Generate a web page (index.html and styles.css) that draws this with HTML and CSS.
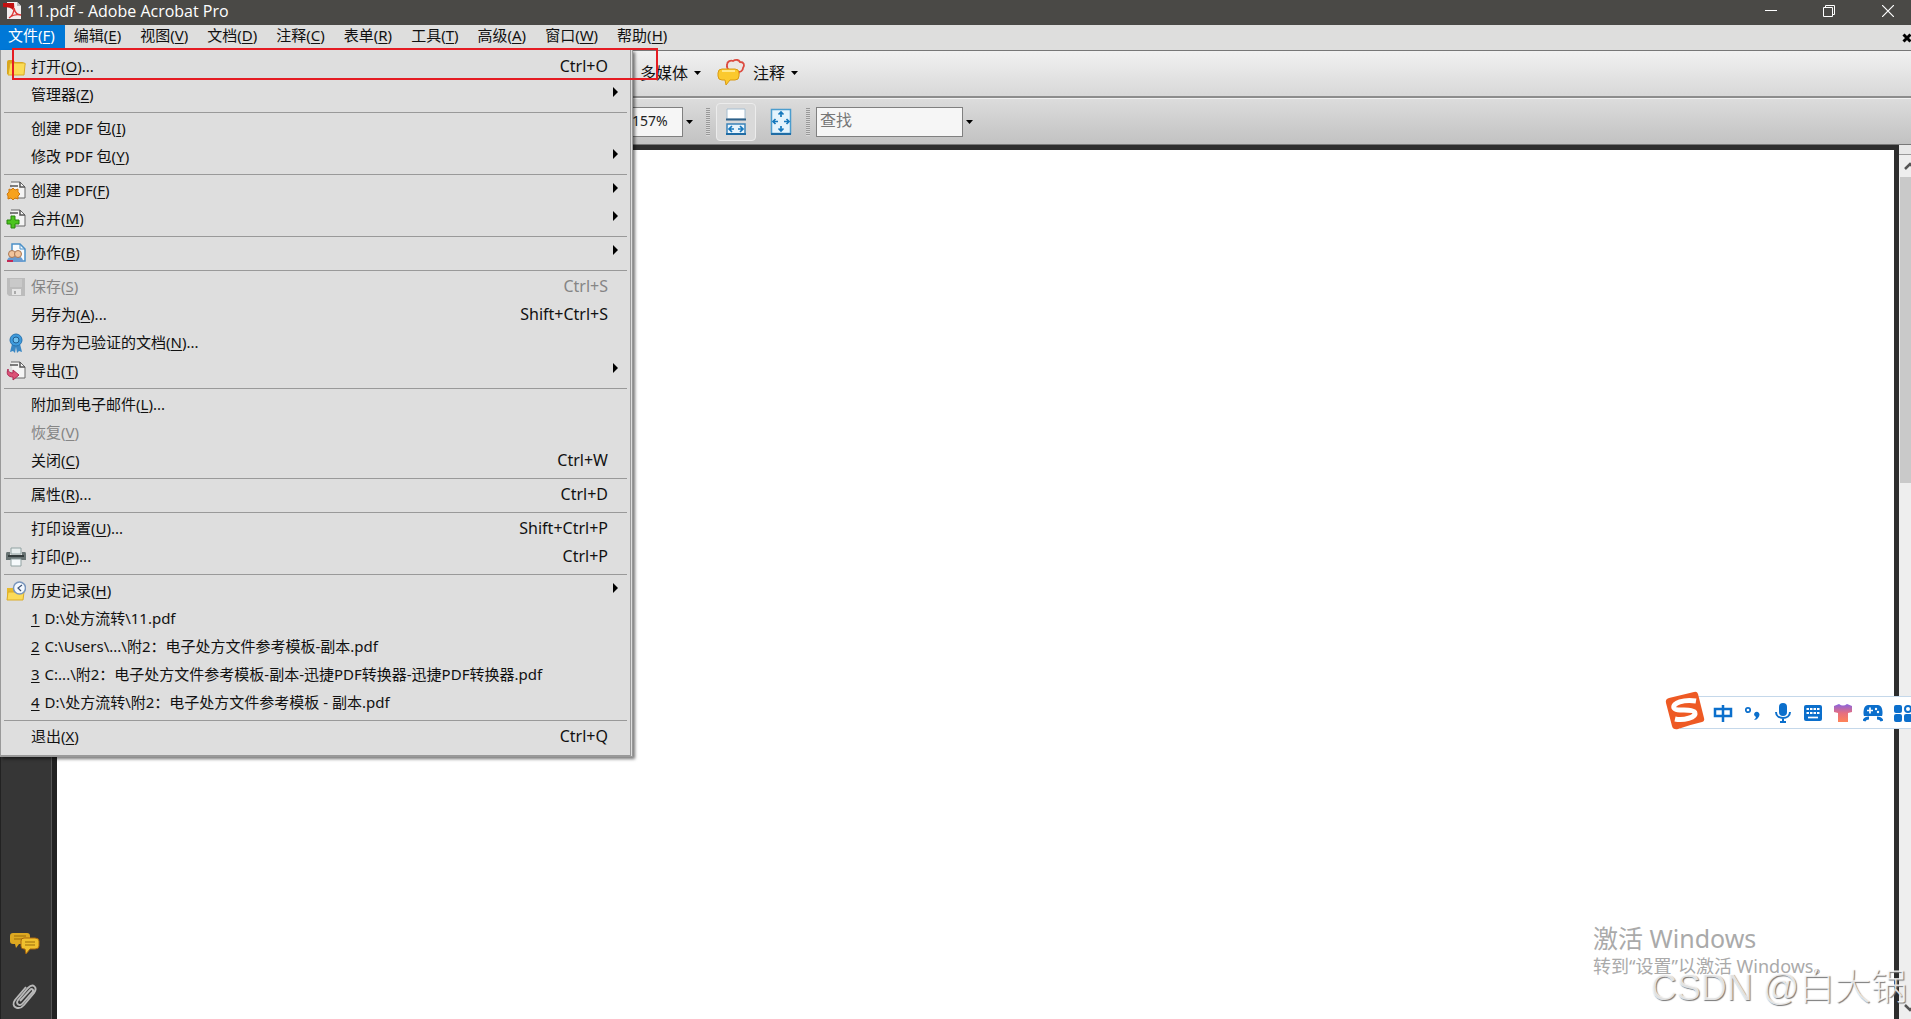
FILE: index.html
```html
<!DOCTYPE html>
<html lang="zh-CN">
<head>
<meta charset="utf-8">
<title>11.pdf - Adobe Acrobat Pro</title>
<link rel="stylesheet" href="styles.css">
</head>
<body>
<div class="app">
  <header class="titlebar">
    <svg class="logo" width="20" height="20" viewBox="0 0 20 20"><path d="M5 1h10l4 4v13H5z" fill="#f3eeee"/><path d="M15 1v4h4" fill="#bbb"/><path d="M1 2h11q1 4-1 7-2-3-10-3z" fill="#c41010"/><path d="M7 17c3-2 5-6 5-10 1 5 3 7 7 7-4-1-8 0-11 2" fill="none" stroke="#d33" stroke-width="1.3"/></svg>
    <h1 class="title">11.pdf - Adobe Acrobat Pro</h1>
    <div class="window-buttons">
      <button class="window-button" aria-label="最小化"><svg width="12" height="12"><path d="M0 5.5h12" stroke="#fff"/></svg></button>
      <button class="window-button" aria-label="还原"><svg width="12" height="12" fill="none" stroke="#fff"><path d="M.5 2.500h9v9h-9zM2.500 2.500v-2h9v9h-2"/></svg></button>
      <button class="window-button" aria-label="关闭"><svg width="12" height="12"><path d="M0 0l12 12M12 0L0 12" stroke="#fff" stroke-width="1.200"/></svg></button>
    </div>
  </header>

  <nav class="menubar">
    <button class="menubar-item menubar-item-open">文件(<u>F</u>)</button>
    <button class="menubar-item">编辑(<u>E</u>)</button>
    <button class="menubar-item">视图(<u>V</u>)</button>
    <button class="menubar-item">文档(<u>D</u>)</button>
    <button class="menubar-item">注释(<u>C</u>)</button>
    <button class="menubar-item">表单(<u>R</u>)</button>
    <button class="menubar-item">工具(<u>T</u>)</button>
    <button class="menubar-item">高级(<u>A</u>)</button>
    <button class="menubar-item">窗口(<u>W</u>)</button>
    <button class="menubar-item">帮助(<u>H</u>)</button>
    <button class="document-close" aria-label="关闭文档"><svg width="10" height="10"><path d="M1.500 1.500l7 7M8.500 1.500l-7 7" stroke="#000" stroke-width="3"/></svg></button>
  </nav>

  <div class="toolbar toolbar-tasks">
    <button class="task">多媒体<svg class="caret" width="7" height="4"><path d="M0 0h7L3.500 4z"/></svg></button>
    <button class="task">
      <svg width="30" height="30" viewBox="0 0 30 30"><path d="M10 7c0-4 4-5 6-4 3-2 6-1 7 1 4 0 5 3 3 6 0 3-3 4-4 4l-1 3-3-3c-3 0-9-2-8-7z" fill="#ece6e3" stroke="#dc4b40" stroke-width="1.800"/><path d="M5 11h13q4 0 4 4v3q0 4-4 4h-5l-4 5-1-5H5q-4 0-4-4v-3q0-4 4-4z" fill="#fbc92d" stroke="#d99a14"/><path d="M5 13h13" stroke="#ffe88a" stroke-width="2"/></svg>
      注释<svg class="caret" width="7" height="4"><path d="M0 0h7L3.500 4z"/></svg></button>
  </div>

  <div class="toolbar toolbar-view">
    <input class="zoom-value" type="text" value="157%" aria-label="缩放比例">
    <button class="drop" aria-label="缩放选项"><svg width="7" height="4"><path d="M0 0h7L3.500 4z"/></svg></button>
    <span class="grip"></span>
    <div class="view-buttons">
      <button class="view-button view-button-on" aria-label="适合宽度"><svg width="22" height="28" viewBox="0 0 22 28"><path d="M2 1h18v10H2z" fill="#fff" stroke="#a4bdd0"/><path d="M1 11.500h20" stroke="#2d6089" stroke-width="2"/><path d="M2 26V16h18v10" fill="#e8f4fc" stroke="#3b83b8" stroke-width="1.500"/><path d="M1 26h20" stroke="#1f6ca5" stroke-width="2"/><path d="M4 21h5M13 21h5M7 18l-3 3 3 3M15 18l3 3-3 3" fill="none" stroke="#1678bd" stroke-width="1.700"/></svg></button>
      <button class="view-button" aria-label="适合页面"><svg width="22" height="28" viewBox="0 0 22 28"><path d="M1.500 1.500h19v24h-19z" fill="#e4f3fc" stroke="#4b9dce" stroke-width="1.500"/><path d="M1 26h20" stroke="#1f6ca5" stroke-width="2"/><path d="M11 4v5M11 18v5M3 13.500h5M14 13.500h5M8.500 6.500L11 4l2.500 2.500M8.500 20.500L11 23l2.500-2.500M5.500 11L3 13.500 5.500 16M16.500 11l2.500 2.500-2.500 2.500" fill="none" stroke="#1678bd" stroke-width="1.700"/></svg></button>
    </div>
    <span class="grip"></span>
    <input class="find" type="text" placeholder="查找" aria-label="查找">
    <button class="drop" aria-label="查找选项"><svg width="7" height="4"><path d="M0 0h7L3.500 4z"/></svg></button>
  </div>

  <main class="workspace">
    <aside class="sidebar">
      <button class="panel-button" aria-label="注释面板"><svg width="30" height="24" viewBox="0 0 30 24"><path d="M3 1h14q3 0 3 3v5q0 3-3 3H9l-3 4-1-4H3q-3 0-3-3V4q0-3 3-3z" fill="#dda821"/><path d="M4 4h12M4 7h8" stroke="#9b6c0a"/><path d="M14 6h11q4 0 4 3v5q0 3-4 3h-5l-4 5-1-5h-1q-3 0-3-3V9q0-3 3-3z" fill="#f0c02e" stroke="#a9660e"/><path d="M15 10h10M15 13h10" stroke="#9b6c0a"/></svg></button>
      <button class="panel-button" aria-label="附件面板"><svg width="30" height="30" viewBox="0 0 30 30"><path d="M10 20L20 9c2-2 4 0 2.500 2L13 22c-3 4-8 1-5-3L18 7c5-5 10-1 6 5L14 24c-5 6-14 2-9-5L16 6" fill="none" stroke="#b9b9b9" stroke-width="1.900"/></svg></button>
    </aside>
    <section class="page" aria-label="文档页面"></section>
    <div class="scrollbar">
      <span class="scroll-split"></span>
      <button class="scroll-arrow" aria-label="向上滚动"><svg width="12" height="8"><path d="M1 7l5-5 5 5" fill="none" stroke="#555" stroke-width="2.500"/></svg></button>
      <span class="scroll-thumb"></span>
      <button class="scroll-arrow scroll-arrow-down" aria-label="向下滚动"><svg width="12" height="8"><path d="M1 1l5 5 5-5" fill="none" stroke="#555" stroke-width="2.500"/></svg></button>
    </div>
  </main>

  <div class="menu" role="menu">
    <button class="item" role="menuitem"><svg class="icon" viewBox="0 0 20 20"><path d="M1 5q0-2 2-2h4l2 2h7q2 0 2 2v10H1z" fill="#d8a51c"/><path d="M4 6h14q2 0 1 2l-1 10H2z" fill="#fbdc55" stroke="#d8aa27"/></svg>打开(<u>O</u>)...<kbd>Ctrl+O</kbd></button>
    <button class="item" role="menuitem"><span class="icon"></span>管理器(<u>Z</u>)<i class="arrow"></i></button>
    <hr class="separator">
    <button class="item" role="menuitem"><span class="icon"></span>创建 PDF 包(<u>I</u>)</button>
    <button class="item" role="menuitem"><span class="icon"></span>修改 PDF 包(<u>Y</u>)<i class="arrow"></i></button>
    <hr class="separator">
    <button class="item" role="menuitem"><svg class="icon" viewBox="0 0 20 20"><path d="M5 1h9l5 5v11H8" fill="#f4f4f4" stroke="#666"/><path d="M14 1v5h5M4 5h8" fill="none" stroke="#555" stroke-width="1.500"/><path d="M7 7l2 2 3-1v3l2 2-2 2v3l-3-1-2 2-2-2-3 1v-3l-1-2 2-2V8l2 1z" fill="#f7a21d" stroke="#cf780d"/></svg>创建 PDF(<u>F</u>)<i class="arrow"></i></button>
    <button class="item" role="menuitem"><svg class="icon" viewBox="0 0 20 20"><path d="M5 1h9l5 5v11H8" fill="#f4f4f4" stroke="#666"/><path d="M14 1v5h5M4 4h8" fill="none" stroke="#555" stroke-width="1.500"/><path d="M5 7h4v4h4v4H9v4H5v-4H1v-4h4z" fill="#4cc51e" stroke="#28830e"/></svg>合并(<u>M</u>)<i class="arrow"></i></button>
    <hr class="separator">
    <button class="item" role="menuitem"><svg class="icon" viewBox="0 0 20 20"><path d="M6 1h8l5 5v12H6z" fill="#f8fbfe" stroke="#4b90c7" stroke-width="1.500"/><path d="M14 1v5h5" fill="none" stroke="#4b90c7"/><path d="M1 19c0-4 2-5 5-5h7c3 0 4 2 4 5z" fill="#6a9bd0"/><path d="M1 17h6v2H1z" fill="#c22855"/><circle cx="6" cy="11" r="3.500" fill="#f2c49c" stroke="#a87552"/><circle cx="12" cy="11" r="3.500" fill="#f2c49c" stroke="#a87552"/></svg>协作(<u>B</u>)<i class="arrow"></i></button>
    <hr class="separator">
    <button class="item" role="menuitem" disabled><svg class="icon" viewBox="0 0 20 20"><path d="M1 1h18v18H3l-2-2z" fill="#bcbcbc"/><path d="M4 2h12v8H4z" fill="#c9c9c9"/><path d="M6 12h9v6H6z" fill="#e5e5e5"/><path d="M8 14h2v3H8z" fill="#aaa"/></svg>保存(<u>S</u>)<kbd>Ctrl+S</kbd></button>
    <button class="item" role="menuitem"><span class="icon"></span>另存为(<u>A</u>)...<kbd>Shift+Ctrl+S</kbd></button>
    <button class="item" role="menuitem"><svg class="icon" viewBox="0 0 20 20"><path d="M6 11L4 19l3-1 2 2 1-6 1 6 2-2 3 1-2-8z" fill="#3987c4"/><circle cx="10" cy="7" r="6" fill="#3e9bdd" stroke="#2873af"/><circle cx="10" cy="7" r="3" fill="#70c1ef" stroke="#215e91"/></svg>另存为已验证的文档(<u>N</u>)...</button>
    <button class="item" role="menuitem"><svg class="icon" viewBox="0 0 20 20"><path d="M5 1h9l5 5v11H8" fill="#f4f4f4" stroke="#666"/><path d="M14 1v5h5M4 4h8" fill="none" stroke="#555" stroke-width="1.500"/><path d="M2 8c0 3 2 4 5 4V9l6 5-6 5v-3c-5 0-7-3-5-8z" fill="#dc5277" stroke="#ae2854"/></svg>导出(<u>T</u>)<i class="arrow"></i></button>
    <hr class="separator">
    <button class="item" role="menuitem"><span class="icon"></span>附加到电子邮件(<u>L</u>)...</button>
    <button class="item" role="menuitem" disabled><span class="icon"></span>恢复(<u>V</u>)</button>
    <button class="item" role="menuitem"><span class="icon"></span>关闭(<u>C</u>)<kbd>Ctrl+W</kbd></button>
    <hr class="separator">
    <button class="item" role="menuitem"><span class="icon"></span>属性(<u>R</u>)...<kbd>Ctrl+D</kbd></button>
    <hr class="separator">
    <button class="item" role="menuitem"><span class="icon"></span>打印设置(<u>U</u>)...<kbd>Shift+Ctrl+P</kbd></button>
    <button class="item" role="menuitem"><svg class="icon" viewBox="0 0 20 20"><path d="M5 1h10v6H5z" fill="#e8eeee" stroke="#91a2a2"/><path d="M1 5h3v3h12V5h3q1 0 1 2v6H0V7q0-2 1-2z" fill="#687373"/><path d="M2 9h16" stroke="#333c3c" stroke-width="2"/><path d="M5 12h10v7H5z" fill="#f6fafc" stroke="#91a2a2"/></svg>打印(<u>P</u>)...<kbd>Ctrl+P</kbd></button>
    <hr class="separator">
    <button class="item" role="menuitem"><svg class="icon" viewBox="0 0 20 20"><path d="M1 7h6l2 2h8v10H1z" fill="#e6b92d"/><path d="M2 11h16l-1 8H1z" fill="#fbdb59" stroke="#dbab29"/><circle cx="13.500" cy="7" r="6" fill="#f4f9ff" stroke="#7895bc" stroke-width="1.500"/><path d="M16 4l-4 3 3 3" fill="none" stroke="#3d5376" stroke-width="1.200"/></svg>历史记录(<u>H</u>)<i class="arrow"></i></button>
    <button class="item" role="menuitem"><span class="icon"></span><u>1</u><span class="file">D:\处方流转\11.pdf</span></button>
    <button class="item" role="menuitem"><span class="icon"></span><u>2</u><span class="file">C:\Users\...\附2：电子处方文件参考模板-副本.pdf</span></button>
    <button class="item" role="menuitem"><span class="icon"></span><u>3</u><span class="file">C:...\附2：电子处方文件参考模板-副本-迅捷PDF转换器-迅捷PDF转换器.pdf</span></button>
    <button class="item" role="menuitem"><span class="icon"></span><u>4</u><span class="file">D:\处方流转\附2：电子处方文件参考模板 - 副本.pdf</span></button>
    <hr class="separator">
    <button class="item" role="menuitem"><span class="icon"></span>退出(<u>X</u>)<kbd>Ctrl+Q</kbd></button>
  </div>
  <div class="highlight"></div>

  <div class="activation">
    <p class="activation-title">激活 Windows</p>
    <p class="activation-text">转到“设置”以激活 Windows。</p>
  </div>
  <p class="watermark">CSDN @白大锅</p>

  <div class="ime">
    <svg class="ime-logo" width="42" height="40" viewBox="0 0 42 40"><path d="M5 7L30 1q3-1 4 2l6 24q1 3-2 4-13 3-24 7-5 1-6-3L2 12q-1-4 3-5z" fill="#ee5a24"/><path d="M32 10C20 8 8 12 10 17c2 4 20 0 21 5 1 4-11 8-20 6" fill="none" stroke="#fff" stroke-width="5"/></svg>
    <button class="ime-button" aria-label="中文"><svg viewBox="0 0 20 20"><path d="M2 6h16v7H2zM10 2v17" fill="none" stroke="#0b6fcc" stroke-width="2.500"/></svg></button>
    <button class="ime-button" aria-label="标点"><svg viewBox="0 0 20 20"><circle cx="5" cy="7" r="2.200" fill="none" stroke="#0b6fcc" stroke-width="1.700"/><path d="M11 11q1-3 4-2 3 2 0 6-1 2-4 2 2-2 2-3-2-1-2-3z" fill="#0b6fcc"/></svg></button>
    <button class="ime-button" aria-label="语音"><svg viewBox="0 0 20 20"><rect x="6" width="8" height="13" rx="4" fill="#0b6fcc"/><path d="M3 9c0 8 14 8 14 0M10 15v4M7 19h6" fill="none" stroke="#0b6fcc" stroke-width="2"/></svg></button>
    <button class="ime-button" aria-label="键盘"><svg viewBox="0 0 20 20"><rect x="1" y="2" width="18" height="16" rx="2" fill="#0b6fcc"/><path d="M3.500 6h13M3.500 10h13" stroke="#fff" stroke-width="2.200" stroke-dasharray="2.500 1"/><path d="M5 14.500h10" stroke="#fff" stroke-width="1.700"/></svg></button>
    <button class="ime-button" aria-label="皮肤"><svg viewBox="0 0 20 20"><defs><linearGradient id="shirt" x2="0" y2="1"><stop stop-color="#8764e0"/><stop offset=".5" stop-color="#e66f80"/><stop offset="1" stop-color="#ff8357"/></linearGradient></defs><path d="M6 1q4 3 8 0l5 2v6l-4 1v9H5v-9L1 9V3z" fill="url(#shirt)"/></svg></button>
    <button class="ime-button" aria-label="游戏"><svg viewBox="0 0 20 20"><path d="M5 2h10c5 0 5 9 4 11H1C0 11 0 2 5 2z" fill="#0b6fcc"/><path d="M4 7.500h6M7 4.500v6" stroke="#fff" stroke-width="1.700"/><circle cx="13" cy="6" r="1.200" fill="#fff"/><circle cx="15" cy="9" r="1.200" fill="#fff"/><path d="M1 18q1-3 5-3M19 18q-1-3-5-3" fill="none" stroke="#0b6fcc" stroke-width="3"/></svg></button>
    <button class="ime-button" aria-label="工具箱"><svg viewBox="0 0 20 20" fill="#0b6fcc"><rect x="1" y="2" width="8" height="8" rx="2"/><rect x="1" y="11" width="8" height="8" rx="2"/><rect x="11" y="11" width="8" height="8" rx="2"/><circle cx="15" cy="6" r="3" fill="none" stroke="#0b6fcc" stroke-width="2"/></svg></button>
  </div>
</div>
</body>
</html>
```
FILE: styles.css
```css
* { box-sizing: border-box; }
body {
  margin: 0;
  overflow: hidden;
  color: #111;
  font: 15px/20px "Noto Sans", "Noto Sans CJK SC", sans-serif;
}
button {
  margin: 0;
  padding: 0;
  border: 0;
  background: none;
  color: inherit;
  font: inherit;
  white-space: nowrap;
}
svg { display: block; flex: none; }
h1, p { margin: 0; font-weight: 400; }
u { text-underline-offset: 2px; }

.app {
  position: relative;
  display: flex;
  flex-direction: column;
  height: 100vh;
  overflow: hidden;
}

.titlebar {
  display: flex;
  align-items: center;
  height: 25px;
  flex: none;
  padding: 0 0 4px 2px;
  background: #4a4946;
  color: #fff;
}
.title { margin-left: 5px; font: 16px/20px "Open Sans", sans-serif; }
.window-buttons { display: flex; margin-left: auto; }
.window-button { display: grid; place-items: center; width: 58px; height: 20px; }
.window-button:last-child { width: 47px; margin-left: 6px; }

.menubar {
  display: flex;
  height: 26px;
  flex: none;
  border-bottom: 1px solid #777;
  background: #dededd;
}
.menubar-item { flex: none; padding: 0 10px 5px 9px; }
.menubar-item-open { padding-left: 8px; background: #0078d7; color: #fff; }
.document-close { margin-left: auto; overflow: hidden; width: 9px; }

.toolbar {
  display: flex;
  align-items: center;
  flex: none;
  height: 47px;
  padding-left: 632px;
}
.toolbar-tasks {
  gap: 16px;
  padding: 0 0 2px 640px;
  border-bottom: 2px solid #8c8c8c;
  background: linear-gradient(#f1f1f1, #d8d8d8);
}
.task { display: flex; align-items: center; gap: 6px; font-size: 16px; }
.toolbar-view {
  border-top: 1px solid #f1f1f1;
  border-bottom: 1px solid #777;
  background: linear-gradient(#dcdcdc, #c2c2c2);
}
.zoom-value, .find {
  height: 30px;
  padding: 0 3px 3px;
  border: 1px solid #808080;
  background: #f6f6f6;
  color: #222;
  font: inherit;
}
.zoom-value { width: 51px; padding: 0 0 3px; border-left: 0; font-size: 14px; }
.find { width: 147px; font-size: 16px; }
.find::placeholder { color: #777; opacity: 1; }
.drop { display: grid; place-items: center; width: 12px; height: 30px; }
.grip {
  width: 4px;
  height: 28px;
  margin: 0 6px 0 11px;
  background: repeating-linear-gradient(#999 0 1px, #d8d8d8 1px 2px);
}
.view-buttons { display: flex; gap: 5px; margin-right: -6px; }
.view-button {
  display: grid;
  place-items: center;
  width: 40px;
  height: 38px;
}
.view-button-on { border: 1px solid #ececec; border-radius: 4px; background: #d9d9d9; }

.workspace { display: flex; flex: 1; min-height: 0; background: #2d2d2d; }
.sidebar {
  display: flex;
  flex-direction: column;
  justify-content: flex-end;
  align-items: center;
  gap: 25px;
  width: 57px;
  padding: 0 9px 8px 0;
  border-left: 1px solid #222;
  background: linear-gradient(90deg, #363636 50px, #555 50px 51px, #222 51px);
}
.page { flex: 1; margin-top: 5px; background: #fff; }
.scrollbar {
  display: flex;
  flex-direction: column;
  width: 12px;
  margin-left: 5px;
  overflow: hidden;
  background: #eee;
}
.scroll-split { height: 10px; border-bottom: 1px solid #999; background: #e8e8e8; }
.scroll-arrow { height: 22px; padding-left: 5px; }
.scroll-thumb { height: 306px; margin-left: 1px; background: #c9c9c9; }
.scroll-arrow-down { margin-top: auto; }

.menu {
  position: absolute;
  top: 50px;
  left: 0;
  width: 633px;
  padding: 3px 0 4px;
  border: solid #999;
  border-width: 0 3px 2px 1px;
  border-right-style: double;
  background: #dedede;
  box-shadow: 2px 2px 3px #0008;
}
.item { display: flex; align-items: center; width: 100%; height: 28px; padding: 0 22px 2px 5px; }
.item:disabled { color: #858585; }
.icon { flex: none; width: 20px; height: 20px; margin: 2px 5px 0 0; }
.file { margin-left: 5px; }
kbd { margin-left: auto; font: inherit; font-size: 16px; }
.arrow {
  margin: 0 -10px 4px auto;
  border: 5px solid transparent;
  border-right: 0;
  border-left: 5px solid #000;
}
.separator { height: 1px; margin: 3px 3px 2px; border: 0; background: #999; }

.highlight {
  position: absolute;
  top: 48px;
  left: 12px;
  width: 646px;
  height: 32px;
  border: 2px solid #e51c23;
}

.activation { position: absolute; right: 79px; bottom: 41px; width: 239px; color: #aaa; font-weight: 300; white-space: nowrap; }
.activation-title { font-size: 25px; line-height: 32px; }
.activation-text { font-size: 18px; line-height: 24px; }
.watermark {
  position: absolute;
  right: 4px;
  bottom: 9px;
  color: #fffc;
  font: 300 36px/44px "Liberation Sans", "Noto Sans CJK SC", sans-serif;
  text-shadow: 1px 1px 1px #777;
  white-space: nowrap;
}

.ime {
  position: absolute;
  top: 696px;
  right: -2px;
  display: flex;
  align-items: center;
  gap: 10px;
  height: 33px;
  border: solid #c5d8ea;
  border-width: 1px 0;
  background: #fff;
}
.ime-logo { margin: -4px -3px 0 -16px; }
.ime-button svg { width: 20px; height: 20px; }
```
